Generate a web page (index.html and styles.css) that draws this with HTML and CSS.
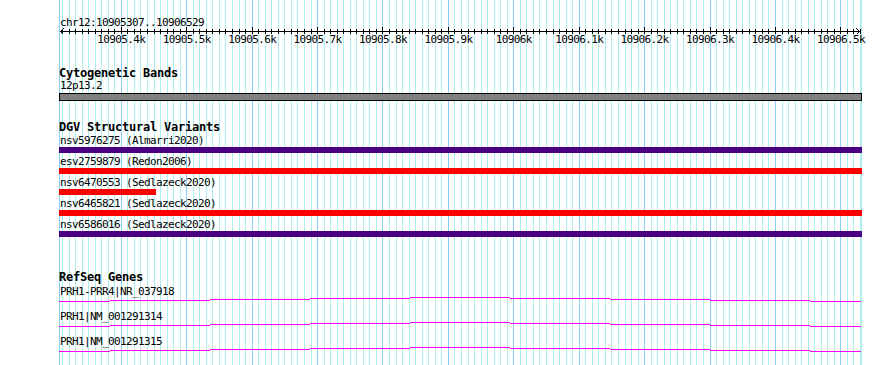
FILE: index.html
```html
<!DOCTYPE html>
<html lang="en">
<head>
  <meta charset="UTF-8" />
  <meta name="viewport" content="width=device-width, initial-scale=1" />
  <title>chr12:10905307..10906529</title>
  <link rel="stylesheet" href="styles.css">
</head>
<body>
  <div class="panel">
    <svg class="grid" id="grid" width="803" height="365" shape-rendering="crispEdges"></svg>

    <div class="ruler">
      <div class="position">chr12:10905307..10906529</div>
      <svg class="scale" id="scale" width="803" height="12" shape-rendering="crispEdges"></svg>
      <span class="tick-label" style="left: 62.3px">10905.4k</span>
      <span class="tick-label" style="left: 127.7px">10905.5k</span>
      <span class="tick-label" style="left: 193.2px">10905.6k</span>
      <span class="tick-label" style="left: 258.6px">10905.7k</span>
      <span class="tick-label" style="left: 324px">10905.8k</span>
      <span class="tick-label" style="left: 389.4px">10905.9k</span>
      <span class="tick-label" style="left: 454.8px">10906k</span>
      <span class="tick-label" style="left: 520.2px">10906.1k</span>
      <span class="tick-label" style="left: 585.6px">10906.2k</span>
      <span class="tick-label" style="left: 651px">10906.3k</span>
      <span class="tick-label" style="left: 716.5px">10906.4k</span>
      <span class="tick-label" style="left: 781.9px">10906.5k</span>
    </div>

    <div class="track cyto">
      <div class="track-title">Cytogenetic Bands</div>
      <div class="feature-label">12p13.2</div>
      <div class="band"></div>
    </div>

    <div class="track dgv">
      <div class="track-title">DGV Structural Variants</div>
      <div class="features">
        <div class="variant">
          <div class="feature-label">nsv5976275 (Almarri2020)</div>
          <div class="bar loss"></div>
        </div>
        <div class="variant">
          <div class="feature-label">esv2759879 (Redon2006)</div>
          <div class="bar gain"></div>
        </div>
        <div class="variant">
          <div class="feature-label">nsv6470553 (Sedlazeck2020)</div>
          <div class="bar gain" style="width: 97px"></div>
        </div>
        <div class="variant">
          <div class="feature-label">nsv6465821 (Sedlazeck2020)</div>
          <div class="bar gain"></div>
        </div>
        <div class="variant">
          <div class="feature-label">nsv6586016 (Sedlazeck2020)</div>
          <div class="bar loss"></div>
        </div>
      </div>
    </div>

    <div class="track refseq">
      <div class="track-title">RefSeq Genes</div>
      <div class="features">
        <div class="gene">
          <div class="feature-label">PRH1-PRR4|NR_037918</div>
          <svg class="transcript" width="803" height="12" shape-rendering="crispEdges"></svg>
        </div>
        <div class="gene">
          <div class="feature-label">PRH1|NM_001291314</div>
          <svg class="transcript" width="803" height="12" shape-rendering="crispEdges"></svg>
        </div>
        <div class="gene">
          <div class="feature-label">PRH1|NM_001291315</div>
          <svg class="transcript" width="803" height="12" shape-rendering="crispEdges"></svg>
        </div>
      </div>
    </div>
  </div>

  <script src="script.js"></script>
</body>
</html>
```

FILE: styles.css
```css
body {
  margin: 0;
  background: #fff;
  color: #000;
  font-family: "DejaVu Sans Mono", monospace;
  font-size: 11px;
  letter-spacing: -0.62px;
}

.panel {
  position: relative;
  margin-left: 59px;
  width: 803px;
  height: 365px;
}

.grid {
  position: absolute;
  top: 0;
  left: 0;
}

.grid .minor {
  fill: #afeeee;
}

.grid .major {
  fill: #87cefa;
}

.ruler {
  position: relative;
  height: 50px;
}

.position {
  padding-top: 16px;
  padding-left: 1px;
  line-height: 13px;
}

.scale {
  position: absolute;
  top: 24px;
  left: 0;
}

.tick-label {
  position: absolute;
  top: 33px;
  line-height: 13px;
  white-space: nowrap;
  transform: translateX(-50%);
}

.track {
  position: relative;
}

.track-title {
  font-weight: bold;
  font-size: 12px;
  letter-spacing: -0.22px;
  line-height: 12px;
  white-space: nowrap;
}

.feature-label {
  padding-left: 1px;
  line-height: 13px;
  white-space: nowrap;
}

.cyto {
  padding-top: 17px;
}

.band {
  margin-top: 1px;
  height: 6px;
  background: #808080;
  border: 1px solid #000;
}

.dgv {
  margin-top: 20px;
}

.features {
  padding-top: 1px;
}

.variant {
  margin-bottom: 2px;
}

.bar {
  height: 6px;
  width: 803px;
}

.bar.loss {
  background: #4b0082;
}

.bar.gain {
  background: #ff0000;
}

.refseq {
  margin-top: 34px;
}

.refseq .features {
  padding-top: 2px;
}

.gene {
  height: 25px;
}

.transcript {
  display: block;
  margin-top: -2px;
}

.transcript rect {
  fill: #ff00ff;
}
```

FILE: script.js
```js
// grid lines and ruler ticks, one every 10 bp
const START = 10905307;
const END = 10906529;
const SCALE = 800 / (END - START + 1);
const NS = "http://www.w3.org/2000/svg";

function xOf(pos) {
  return Math.round(1 + (pos - START) * SCALE);
}

function rect(svg, x, y, w, h, cls) {
  const r = document.createElementNS(NS, "rect");
  r.setAttribute("x", x);
  r.setAttribute("y", y);
  r.setAttribute("width", w);
  r.setAttribute("height", h);
  if (cls) r.setAttribute("class", cls);
  svg.appendChild(r);
}

const grid = document.getElementById("grid");
const scale = document.getElementById("scale");

// panel edges
rect(grid, 0, 0, 1, 365, "major");
rect(grid, 802, 0, 1, 365, "minor");

// ruler backbone and arrow heads
rect(scale, 1, 7, 800, 1);
const arrows = document.createElementNS(NS, "path");
arrows.setAttribute("d", "M1.5 7.5 L4.5 4.5 M1.5 7.5 L4.5 10.5 M800.5 7.5 L797.5 4.5 M800.5 7.5 L797.5 10.5");
arrows.setAttribute("stroke", "#000");
arrows.setAttribute("fill", "none");
scale.appendChild(arrows);

for (let p = 10905310; p <= 10906530; p += 10) {
  const x = xOf(p);
  const major = p % 100 === 0;
  rect(grid, x, 0, 1, 365, major ? "major" : "minor");
  if (major) {
    rect(scale, x, 3, 1, 7);
  } else {
    rect(scale, x, 5, 1, 5);
  }
}

// transcript line, stepped the way the track draws it
const steps = [[0, 51, 5], [51, 151, 4], [151, 251, 3], [251, 351, 2], [351, 451, 1],
  [451, 551, 2], [551, 651, 3], [651, 751, 4], [751, 802, 5]];

document.querySelectorAll(".transcript").forEach(svg => {
  steps.forEach(([x1, x2, y]) => rect(svg, x1, y, x2 - x1, 1));
});
```
